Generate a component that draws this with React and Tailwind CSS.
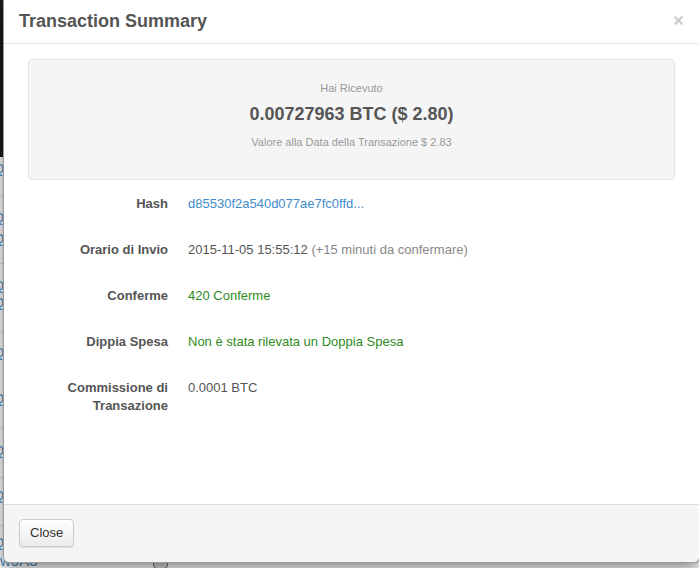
import { X } from 'lucide-react'

const rows = [
  { label: 'Hash', value: <a className="text-[#428bca]">d85530f2a540d077ae7fc0ffd...</a> },
  {
    label: 'Orario di Invio',
    value: (
      <>
        <span className="text-[#555]">2015-11-05 15:55:12</span>{' '}
        <span className="text-[#888]">(+15 minuti da confermare)</span>
      </>
    ),
  },
  { label: 'Conferme', value: <span className="text-[#2f8a22]">420 Conferme</span> },
  { label: 'Dippia Spesa', value: <span className="text-[#2f8a22]">Non è stata rilevata un Doppia Spesa</span> },
  { label: 'Commissione di Transazione', value: <span className="text-[#555]">0.0001 BTC</span> },
]

// bits of the page that sit behind the modal, only a sliver shows
const behind = [163, 212, 233, 280, 297, 347, 393, 445, 490, 537]
const lines = [196, 263, 332, 428, 477, 525]

export default function App() {
  return (
    <div className="relative h-[568px] w-[699px] overflow-hidden bg-white font-['Liberation_Sans',Arial,sans-serif]">
      <div className="absolute left-0 top-0 h-[157px] w-[12px] bg-[#1b1b1b]" />
      {lines.map((y) => (
        <div key={y} className="absolute left-0 h-px w-[12px] bg-[#ddd]" style={{ top: y }} />
      ))}
      {behind.map((y) => (
        <div
          key={y}
          className="absolute left-[-40px] w-[44px] text-right text-[13px] leading-[12px] text-[#428bca]"
          style={{ top: y }}
        >
          1BsQ
        </div>
      ))}
      <div className="absolute left-0 top-[552px] text-[15px] leading-[18px] text-[#428bca]">w0A3</div>
      <div className="absolute left-[153px] top-[557px] h-[12px] w-[15px] rounded-sm border border-[#777] bg-[#ddd]" />

      {/* modal */}
      <div className="absolute left-[3px] top-0 w-[697px] rounded-b-md border border-t-0 border-black/40 bg-white shadow-[0_5px_15px_rgba(0,0,0,0.5)]">
        <div className="flex h-[44px] items-start justify-between border-b border-[#e5e5e5] pl-[15px] pr-[14px] pt-[11px]">
          <h4 className="text-[18px] font-bold leading-[20px] text-[#555]">Transaction Summary</h4>
          <button type="button" className="mt-[3px] text-black opacity-20">
            <X className="h-[13px] w-[13px]" strokeWidth={4} />
          </button>
        </div>

        <div className="px-[24px] pb-[75px] pt-[15px]">
          <div className="flex h-[121px] flex-col items-center rounded border border-[#e3e3e3] bg-[#f5f5f5] pt-[20px] text-center">
            <p className="text-[11px] leading-[16px] text-[#999]">Hai Ricevuto</p>
            <p className="mt-[5px] text-[18px] font-bold leading-[26px] text-[#555]">0.00727963 BTC ($ 2.80)</p>
            <p className="mt-[7px] text-[11px] leading-[16px] text-[#999]">Valore alla Data della Transazione $ 2.83</p>
          </div>

          <dl className="mt-px text-[13px] leading-[18px]">
            {rows.map((r) => (
              <div key={r.label} className="flex py-[14px]">
                <dt className="w-[140px] shrink-0 text-right font-bold text-[#555]">{r.label}</dt>
                <dd className="ml-[20px]">{r.value}</dd>
              </div>
            ))}
          </dl>
        </div>

        <div className="rounded-b-md border-t border-[#ddd] bg-[#f5f5f5] px-[15px] pb-[15px] pt-[14px]">
          <button
            type="button"
            className="h-[28px] rounded-[4px] border border-[#ccc] bg-linear-to-b from-white to-[#ebebeb] px-[10px] text-[13px] text-[#333] shadow-[0_1px_1px_rgba(0,0,0,0.1)]"
          >
            Close
          </button>
        </div>
      </div>
    </div>
  )
}
